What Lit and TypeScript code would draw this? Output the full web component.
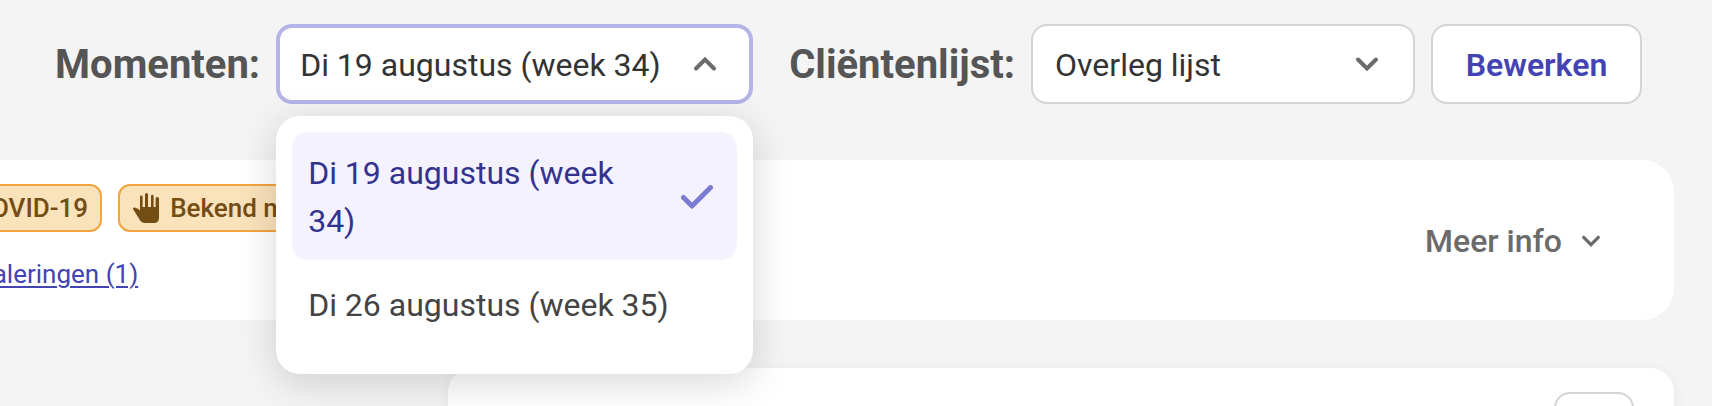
import { LitElement, html, css, svg } from "lit";
import { customElement, property, state } from "lit/decorators.js";
import { classMap } from "lit/directives/class-map.js";

const handIcon = svg`
  <path d="M8 4.8a1.3 1.3 0 0 1 2.6 0V15H13V2.500a1.500 1.500 0 0 1 3 0V15h3V4a1.300 1.300 0 0 1 2.600 0V15h2V6.700a1.700 1.700 0 0 1 3.400 0V26c0 3-2 5-5 5H13c-2.400 0-3.800-1-5-2.800L1.300 17.600c-.8-1.300 0-2.300 1.200-2 2 .4 3.800 1.400 5.500 2.800z"/>`;

@customElement("chevron-icon")
class ChevronIcon extends LitElement {
  @property({ type: Boolean }) up = false;

  static styles = css`
    :host { display: block; width: 32px; height: 32px; color: #6b6b6b; }
    :host([small]) { width: 26px; height: 26px; }
    svg { display: block; width: 100%; height: 100%; }
    path { fill: none; stroke: currentColor; stroke-width: 4; stroke-linecap: round; }
  `;

  render() {
    return html`<svg viewBox="0 0 32 32" aria-hidden="true">
      <path d=${this.up ? "M7 20.500l9-9 9 9" : "M7 11.500l9 9 9-9"}></path>
    </svg>`;
  }
}

@customElement("app-root")
class AppRoot extends LitElement {
  @state() private moments = ["Di 19 augustus (week 34)", "Di 26 augustus (week 35)"];
  @state() private selected = 0;

  static styles = css`
    :host {
      display: block;
      min-height: 100vh;
      overflow: hidden;
      background: #f4f4f4;
      color: #333;
      font-family: Roboto, "Liberation Sans", sans-serif;
      font-size: 32px;
      line-height: 48px;
    }
    * { box-sizing: border-box; }
    button, select { font: inherit; color: inherit; margin: 0; cursor: pointer; }

    .toolbar {
      display: flex;
      justify-content: flex-end;
      gap: 16px;
      padding: 24px 70px 56px 0;
    }
    .field { display: flex; align-items: center; gap: 16px; }
    .field.moments { margin-right: 20px; }
    .label { padding-top: 2px; font-size: 40px; font-weight: 700; color: #555; white-space: nowrap; }
    .control { position: relative; width: 384px; }
    .moments .control { width: 477px; }
    .control select {
      display: block;
      width: 100%;
      height: 80px;
      padding: 2px 80px 0 22px;
      border: 2px solid #d4d4d4;
      border-radius: 16px;
      background: #fff;
      appearance: none;
      outline: none;
    }
    .control select.open { padding: 2px 72px 0 20px; border: 4px solid #b4b4e8; }
    .control chevron-icon { position: absolute; top: 24px; right: 32px; pointer-events: none; }
    .edit {
      width: 211px;
      height: 80px;
      padding: 2px 0 0;
      border: 2px solid #d4d4d4;
      border-radius: 16px;
      background: #fff;
      color: #4343b3;
      font-weight: 600;
    }

    .menu {
      position: absolute;
      z-index: 2;
      top: 92px;
      left: 0;
      right: 0;
      display: flex;
      flex-direction: column;
      gap: 4px;
      padding: 16px 16px 30px;
      border-radius: 24px;
      background: #fff;
      box-shadow: 0 8px 40px rgba(0, 0, 0, 0.16);
    }
    .option {
      display: flex;
      align-items: center;
      justify-content: space-between;
      gap: 16px;
      padding: 17px 24px 15px 16px;
      border: 0;
      border-radius: 16px;
      background: none;
      color: #444;
      text-align: left;
    }
    .option.active { background: #f4f2fe; color: #33338f; }
    .check { flex: none; width: 32px; height: 24px; }
    .check path { fill: none; stroke: #7b7bcf; stroke-width: 5; stroke-linecap: round; stroke-linejoin: round; }

    .client {
      display: flex;
      align-items: center;
      justify-content: space-between;
      height: 160px;
      margin: 0 38px 48px -102px;
      padding: 0 70px 0 24px;
      border-radius: 32px;
      background: #fff;
    }
    .details { display: flex; flex-direction: column; gap: 20px; font-size: 26px; line-height: 44px; }
    .tags { display: flex; gap: 16px; }
    .tag {
      display: flex;
      align-items: center;
      gap: 10px;
      padding: 0 12px;
      border: 2px solid #f2a43e;
      border-radius: 12px;
      background: #fae2bb;
      color: #744d15;
      font-weight: 500;
      white-space: nowrap;
    }
    .tag svg { width: 28px; height: 32px; fill: currentColor; }
    .link {
      margin-left: 20px;
      color: #4343b3;
      text-decoration-thickness: 2px;
      text-underline-offset: 3px;
    }
    .more {
      display: flex;
      align-items: center;
      gap: 16px;
      padding: 2px 0 0;
      border: 0;
      background: none;
      color: #6b6b6b;
      font-weight: 500;
    }

    .content {
      display: flex;
      justify-content: flex-end;
      min-height: 240px;
      margin: 0 38px -202px 448px;
      padding: 24px 40px;
      border-radius: 24px;
      background: #fff;
      box-shadow: 0 4px 16px rgba(0, 0, 0, 0.06);
    }
    .square {
      width: 80px;
      height: 80px;
      border: 2px solid #d4d4d4;
      border-radius: 16px;
      background: #fff;
    }
  `;

  render() {
    return html`
      <header class="toolbar">
        <div class="field moments">
          <label class="label" for="moment">Momenten:</label>
          <div class="control">
            <select id="moment" class="open" @mousedown=${(e: Event) => e.preventDefault()}>
              ${this.moments.map((m, i) => html`<option ?selected=${i === this.selected}>${m}</option>`)}
            </select>
            <chevron-icon up></chevron-icon>
            <div class="menu" role="listbox" aria-label="Momenten">
              ${this.moments.map((m, i) => {
                const active = i === this.selected;
                return html`<button
                  type="button"
                  role="option"
                  aria-selected=${active}
                  class=${classMap({ option: true, active })}
                  @click=${() => (this.selected = i)}
                >
                  <span>${m}</span>
                  ${active
                    ? html`<svg class="check" viewBox="0 0 32 24" aria-hidden="true"><path d="M2.500 12.500l8.500 8.500L29.500 2.500"></path></svg>`
                    : null}
                </button>`;
              })}
            </div>
          </div>
        </div>
        <div class="field">
          <label class="label" for="list">Cliëntenlijst:</label>
          <div class="control">
            <select id="list"><option>Overleg lijst</option></select>
            <chevron-icon></chevron-icon>
          </div>
        </div>
        <button class="edit" type="button">Bewerken</button>
      </header>

      <section class="client">
        <div class="details">
          <div class="tags">
            <span class="tag"><svg viewBox="0 0 28 32" aria-hidden="true">${handIcon}</svg>COVID-19</span>
            <span class="tag"><svg viewBox="0 0 28 32" aria-hidden="true">${handIcon}</svg>Bekend m</span>
          </div>
          <div><a class="link" href="#signaleringen">Signaleringen (1)</a></div>
        </div>
        <button class="more" type="button">Meer info <chevron-icon small></chevron-icon></button>
      </section>

      <section class="content">
        <button class="square" type="button" aria-label="Opties"></button>
      </section>
    `;
  }
}
